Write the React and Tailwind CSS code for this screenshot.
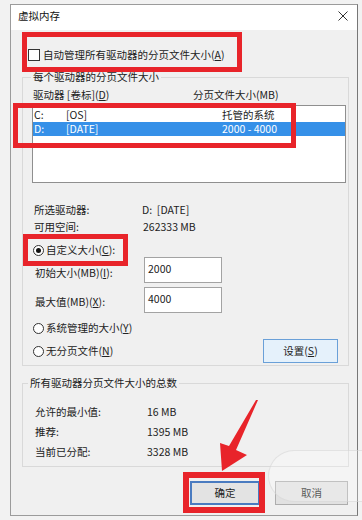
import React from 'react'

const U = ({ children }) => <span className="underline">{children}</span>

function Radio({ checked }) {
  return (
    <span className="w-[11px] h-[11px] rounded-full border border-[#333] bg-white flex items-center justify-center shrink-0">
      {checked && <span className="w-[5px] h-[5px] rounded-full bg-[#111]" />}
    </span>
  )
}

function Legend({ children, className }) {
  return <legend className={`px-[2px] leading-[14px] ${className}`}>{children}</legend>
}

export default function App() {
  return (
    <div className="w-[362px] h-[520px] relative overflow-hidden bg-[#f2f2f2] pl-[10px] pt-[4px] font-['Noto_Sans_CJK_SC',sans-serif] text-[10.5px] leading-[14px] text-[#222]">
      {/* dialog window */}
      <div className="w-[348px] h-[512px] border border-[#9b9b9b] border-r-[#777] bg-[#f0f0f0] flex flex-col">
        {/* title bar */}
        <div className="h-[25px] bg-white flex items-center justify-between pl-[7px] pr-[9px] pb-[3px] shrink-0">
          <span className="text-[10.5px] text-[#111]">虚拟内存</span>
          <svg width="10" height="10" viewBox="0 0 10 10">
            <path d="M0.5 0.5 L9.5 9.5 M9.5 0.5 L0.5 9.5" stroke="#333" strokeWidth="1" fill="none" />
          </svg>
        </div>

        <div className="flex flex-col pl-[11px] pr-[8px]">
          {/* auto manage checkbox */}
          <div className="mt-[19px] h-[12px] flex items-center gap-[3px] ml-[6px]">
            <span className="w-[12px] h-[12px] border border-[#333] bg-white shrink-0" />
            <span>自动管理所有驱动器的分页文件大小(<U>A</U>)</span>
          </div>

          {/* per-drive group */}
          <fieldset className="mt-[9px] border border-[#d9d9d9] pb-[2px] flex flex-col">
            <Legend className="ml-[8px]">每个驱动器的分页文件大小</Legend>
            <div className="mt-[4px] h-[14px] flex ml-[10px]">
              <span className="w-[160px]">驱动器 [卷标](<U>D</U>)</span>
              <span>分页文件大小(MB)</span>
            </div>
            <div className="mt-[3px] ml-[9px] w-[314px] h-[78px] border border-[#8f8f8f] bg-white pt-[2px]">
              <div className="h-[14px] flex pl-[1px]">
                <span className="w-[32px]">C:</span>
                <span className="w-[156px]">[OS]</span>
                <span>托管的系统</span>
              </div>
              <div className="h-[14px] flex pl-[1px] bg-[#3590e8] text-white">
                <span className="w-[32px]">D:</span>
                <span className="w-[156px]">[DATE]</span>
                <span>2000 - 4000</span>
              </div>
            </div>

            <div className="mt-[20px] h-[14px] flex ml-[11px]">
              <span className="w-[108px]">所选驱动器:</span>
              <span>D:&nbsp;&nbsp;[DATE]</span>
            </div>
            <div className="mt-[3px] h-[14px] flex ml-[11px]">
              <span className="w-[109px]">可用空间:</span>
              <span>262333 MB</span>
            </div>

            <div className="mt-[9px] h-[14px] flex items-center gap-[2px] ml-[10px]">
              <Radio checked />
              <span>自定义大小(<U>C</U>):</span>
            </div>
            <div className="h-[26px] flex items-start ml-[12px]">
              <span className="w-[109px] mt-[9px]">初始大小(MB)(<U>I</U>):</span>
              <div className="w-[78px] h-[26px] border border-[#a3a3a3] bg-white pl-[3px] pt-[4px]">2000</div>
            </div>
            <div className="mt-[4px] h-[26px] flex items-start ml-[12px]">
              <span className="w-[109px] mt-[8px]">最大值(MB)(<U>X</U>):</span>
              <div className="w-[78px] h-[26px] border border-[#a3a3a3] bg-white pl-[3px] pt-[4px]">4000</div>
            </div>

            <div className="mt-[8px] h-[14px] flex items-center gap-[2px] ml-[10px]">
              <Radio />
              <span>系统管理的大小(<U>Y</U>)</span>
            </div>
            <div className="mt-[4px] h-[24px] flex items-center ml-[10px]">
              <div className="flex items-center gap-[2px]">
                <Radio />
                <span>无分页文件(<U>N</U>)</span>
              </div>
              <div className="ml-auto mr-[10px] w-[75px] h-[24px] border border-[#6aa0d8] bg-[#e5f1fb] flex items-center justify-center">
                设置(<U>S</U>)
              </div>
            </div>
          </fieldset>

          {/* totals group */}
          <fieldset className="mt-[10px] border border-[#d9d9d9] pb-[7px] flex flex-col">
            <Legend className="ml-[5px]">所有驱动器分页文件大小的总数</Legend>
            <div className="mt-[15px] h-[14px] flex ml-[12px]">
              <span className="w-[112px]">允许的最小值:</span>
              <span>16 MB</span>
            </div>
            <div className="mt-[6px] h-[14px] flex ml-[12px]">
              <span className="w-[112px]">推荐:</span>
              <span>1395 MB</span>
            </div>
            <div className="mt-[6px] h-[14px] flex ml-[12px]">
              <span className="w-[112px]">当前已分配:</span>
              <span>3328 MB</span>
            </div>
          </fieldset>

          {/* dialog buttons */}
          <div className="mt-[14px] flex justify-end gap-[15px] pr-[1px]">
            <div className="w-[70px] h-[24px] border-2 border-[#4a7bc0] bg-[#e3e3e3] flex items-center justify-center">确定</div>
            <div className="w-[73px] h-[24px] border border-[#adadad] bg-[#e1e1e1] flex items-center justify-center">取消</div>
          </div>
        </div>
      </div>

      {/* watermark blob */}
      <div className="absolute left-[268px] top-[450px] w-[150px] h-[52px] rounded-full bg-white/25 border border-[#cfcfcf]/50" />

      {/* red annotation boxes */}
      <div className="absolute left-[22px] top-[32px] w-[220px] h-[40px] border-[5px] border-[#e8242a]" />
      <div className="absolute left-[13px] top-[103px] w-[283px] h-[45px] border-[5px] border-[#e8242a]" />
      <div className="absolute left-[23px] top-[234px] w-[105px] h-[32px] border-[5px] border-[#e8242a]" />
      <div className="absolute left-[183px] top-[472px] w-[82px] h-[41px] border-[6px] border-[#e8242a]" />

      {/* red arrow */}
      <svg className="absolute left-0 top-0 pointer-events-none" width="362" height="520" viewBox="0 0 362 520">
        <polygon points="258,400 236,450 247,455 222,471 220,443 229,446 256,400" fill="#e8242a" />
      </svg>
    </div>
  )
}
